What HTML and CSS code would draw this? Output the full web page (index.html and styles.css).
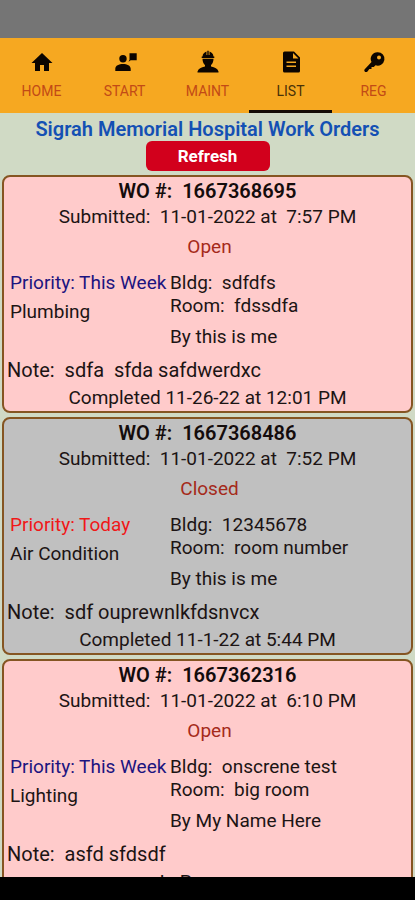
FILE: index.html
```
<!DOCTYPE html>
<html lang="en">
<head>
<meta charset="utf-8">
<meta name="viewport" content="width=device-width, initial-scale=1">
<title>Work Orders</title>
<link rel="stylesheet" href="styles.css">
</head>
<body>
<div class="status-bar"></div>
<nav class="tabs">
  <a class="tab" href="#home">
    <svg viewBox="0 0 24 24"><path d="M10 21v-6h4v6h5v-8h3.500L12 3 1.500 13H5v8z"/></svg>
    <span>HOME</span>
  </a>
  <a class="tab" href="#start">
    <svg viewBox="0 0 24 24"><circle cx="10" cy="8.700" r="3.700"/><path d="M2.300 21v-2.200C2.300 15.500 6 14 10 14s7.700 1.500 7.700 4.800V21zM16.500 3.200h7.200v7h-6l-2.200 1.500 1-2z"/></svg>
    <span>START</span>
  </a>
  <a class="tab" href="#maint">
    <svg viewBox="0 0 24 24"><path d="M6.500 6.500C6.800 3.500 8.500 2 10.500 1.400V5h.8V.8h1.400V5h.8V1.400c2 .6 3.700 2.100 4 5.100h.8v1.400H5.700V6.500zM6.500 8.800h11c0 3-1 5-2.500 6.200v1.500c4 .8 6.500 2 7.500 5v1h-21v-1c1-3 3.500-4.200 7.500-5V15C7.500 13.800 6.500 11.800 6.500 8.800z"/></svg>
    <span>MAINT</span>
  </a>
  <a class="tab tab-active" href="#list" aria-current="page">
    <svg viewBox="0 0 24 24"><path d="M5.500 1.500H15l6 6v13.500a1.500 1.500 0 0 1-1.500 1.500h-14A1.500 1.500 0 0 1 4 21V3A1.500 1.500 0 0 1 5.500 1.500zM14 3v5.500h5.500zM7.500 11.500V13h9.500v-1.500zm0 4V17h9.500v-1.500z" fill-rule="evenodd"/></svg>
    <span>LIST</span>
  </a>
  <a class="tab" href="#reg">
    <svg viewBox="0 0 24 24"><path d="M15.800 2.200a6.700 6.700 0 1 1-2.300 13L11.800 17H9.500v2H7.300L5.500 21.500C4 23 1.500 21.500 2.500 19.500L9.500 12A6.700 6.700 0 0 1 15.800 2.200zm1.200 3.300a2 2 0 1 0 0 4 2 2 0 0 0 0-4z" fill-rule="evenodd"/></svg>
    <span>REG</span>
  </a>
</nav>
<main class="content">
  <header class="heading">
    <h1>Sigrah Memorial Hospital Work Orders</h1>
    <button class="refresh" type="button">Refresh</button>
  </header>
  <section class="orders">
    <article class="order">
      <h2>WO #:  1667368695</h2>
      <p class="submitted">Submitted:  11-01-2022 at  7:57 PM</p>
      <p class="state">Open</p>
      <div class="details">
        <div class="kind"><p class="priority">Priority: This Week</p><p>Plumbing</p></div>
        <div class="place"><p>Bldg:  sdfdfs</p><p>Room:  fdssdfa</p><p class="author">By this is me</p></div>
      </div>
      <p class="note">Note:  sdfa  sfda safdwerdxc</p>
      <p class="completed">Completed 11-26-22 at 12:01 PM</p>
    </article>
    <article class="order order-closed">
      <h2>WO #:  1667368486</h2>
      <p class="submitted">Submitted:  11-01-2022 at  7:52 PM</p>
      <p class="state">Closed</p>
      <div class="details">
        <div class="kind"><p class="priority priority-today">Priority: Today</p><p>Air Condition</p></div>
        <div class="place"><p>Bldg:  12345678</p><p>Room:  room number</p><p class="author">By this is me</p></div>
      </div>
      <p class="note">Note:  sdf ouprewnlkfdsnvcx</p>
      <p class="completed">Completed 11-1-22 at 5:44 PM</p>
    </article>
    <article class="order">
      <h2>WO #:  1667362316</h2>
      <p class="submitted">Submitted:  11-01-2022 at  6:10 PM</p>
      <p class="state">Open</p>
      <div class="details">
        <div class="kind"><p class="priority">Priority: This Week</p><p>Lighting</p></div>
        <div class="place"><p>Bldg:  onscrene test</p><p>Room:  big room</p><p class="author">By My Name Here</p></div>
      </div>
      <p class="note">Note:  asfd sfdsdf</p>
      <p class="completed">In Progress</p>
    </article>
  </section>
</main>
<div class="system-bar"></div>
</body>
</html>
```
FILE: styles.css
```
* { box-sizing: border-box; }
body {
  margin: 0;
  height: 100vh;
  display: flex;
  flex-direction: column;
  overflow: hidden;
  background: #d0dac5;
  color: #1c1414;
  font-family: Roboto, "Liberation Sans", sans-serif;
  font-size: 19px;
  line-height: 23px;
}
h1, h2, p { margin: 0; white-space: pre; }
.status-bar { flex: none; height: 38px; background: #757575; }
.tabs { flex: none; display: flex; background: #f6a821; }
.tab {
  flex: 1;
  display: flex;
  flex-direction: column;
  align-items: center;
  gap: 8px;
  padding: 12px 0 10px;
  border-bottom: 3px solid transparent;
  color: #c24a16;
  font-size: 14px;
  line-height: 18px;
  text-decoration: none;
}
.tab svg { width: 24px; height: 24px; fill: #0c0500; }
.tab-active { color: #4a3208; border-color: #140c05; }
.content { flex: 1; min-height: 0; overflow: hidden; }
.heading { display: flex; flex-direction: column; align-items: center; padding: 4px 0; }
h1 { color: #1450b4; font-size: 20px; line-height: 24px; font-weight: 600; }
.refresh {
  width: 124px;
  height: 30px;
  padding: 0;
  border: 0;
  border-radius: 6px;
  background: #d2001c;
  color: #fff;
  font: 700 17px/30px Roboto, "Liberation Sans", sans-serif;
}
.orders { display: flex; flex-direction: column; gap: 4px; padding: 0 2px; }
.order {
  padding: 2px 3px 0;
  border: 2px solid #855522;
  border-radius: 8px;
  background: #ffcbcb;
}
.order-closed { background: #c0c0c0; }
h2 { font-size: 20px; line-height: 24px; font-weight: 600; text-align: center; color: #140c0c; }
.submitted, .completed { text-align: center; }
.submitted, .state { line-height: 28px; }
.state { margin-top: 2px; padding-left: 4px; text-align: center; color: #a52a1a; }
.details { display: flex; gap: 2px; padding: 7px 3px 0; }
.kind { width: 40%; line-height: 29px; }
.priority { color: #1c1480; }
.priority-today { color: #f01818; }
.place { padding-top: 3px; }
.author { margin-top: 8px; }
.note { margin-top: 9px; font-size: 20px; }
.note, .completed { line-height: 27px; }
.system-bar { flex: none; height: 23px; background: #000; }
```
